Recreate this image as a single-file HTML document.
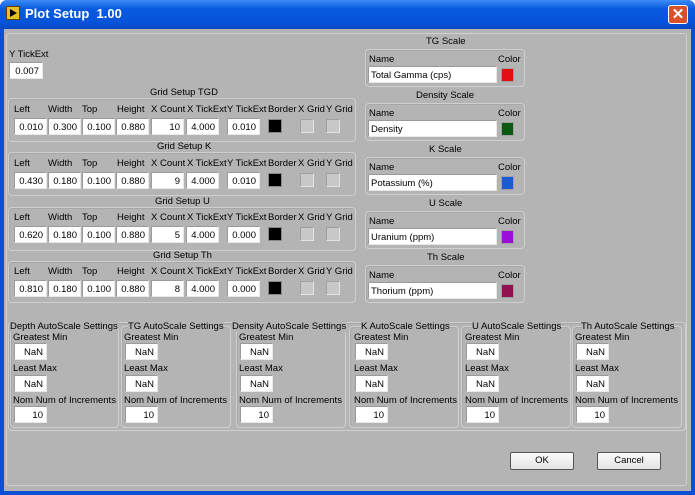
<!DOCTYPE html>
<html><head><style>
*{margin:0;padding:0;box-sizing:border-box}
body{width:695px;height:495px;overflow:hidden;background:#fff;font-family:"Liberation Sans",sans-serif;font-size:9.5px;color:#000;position:relative}
.a{position:absolute;white-space:nowrap}
.win{position:absolute;left:0;top:0;width:695px;height:495px;background:#0a4fd6;border-radius:7px 7px 0 0}
.title{position:absolute;left:0;top:0;width:695px;height:29px;border-radius:7px 7px 0 0;background:linear-gradient(#3d8cf5,#0a5ae0 30%,#0553d8 80%,#0a48c0)}
.client{position:absolute;left:4px;top:29px;width:687px;height:462px;background:#b4b4b4}
.inner{position:absolute;left:6px;top:33px;width:681px;height:453px;border:1px solid #d0d0d0;border-radius:3px}
.grp{position:absolute;border:1px solid #cfcfcf;border-radius:4px;box-shadow:inset 1px 1px 0 #a8a8a8}
.tb{position:absolute;background:#fff;height:17px;line-height:17px;text-align:right;padding-right:3px;border:1px solid #9a9a9a;border-right-color:#e8e8e8;border-bottom-color:#e8e8e8}
.sw{position:absolute;width:14px;height:14px;border:1px solid #888}
.ck{position:absolute;width:14px;height:14px;background:#c8c8c8;border:1px solid #a0a0a0;border-right-color:#e4e4e4;border-bottom-color:#e4e4e4}
.btn{position:absolute;height:18px;line-height:16px;text-align:center;background:linear-gradient(#fafafa,#e4e4e4);border:1px solid #555;border-radius:2px}
</style></head><body>
<div class="win"></div>
<div class="title"></div>
<div class="a" style="left:6px;top:6px;width:14px;height:14px;background:#e8c020;border:1px solid #604000"><div style="position:absolute;left:3px;top:2px;width:0;height:0;border-left:7px solid #000;border-top:4px solid transparent;border-bottom:4px solid transparent"></div></div>
<div class="a" style="left:25px;top:6px;color:#fff;font-weight:bold;font-size:13px">Plot Setup&nbsp;&nbsp;1.00</div>
<div class="a" style="left:668px;top:5px;width:20px;height:19px;background:#d9502c;border:1px solid #fff;border-radius:3px;color:#fff;font-size:15px;line-height:17px;text-align:center;font-weight:bold">✕</div>
<div class="client"></div>
<div class="inner"></div>

<div class="a" style="left:9px;top:49px">Y TickExt</div>
<div class="tb" style="left:9px;top:62px;width:34px">0.007</div>

<!-- grid groups -->
<div id="grids"></div>
<div class="a" style="left:150px;top:87px">Grid Setup TGD</div>
<div class="a" style="left:157px;top:141px">Grid Setup K</div>
<div class="a" style="left:155px;top:196px">Grid Setup U</div>
<div class="a" style="left:153px;top:250px">Grid Setup Th</div>

<div class="grp" style="left:8px;top:98px;width:348px;height:44px"></div>
<div class="grp" style="left:8px;top:152px;width:348px;height:44px"></div>
<div class="grp" style="left:8px;top:207px;width:348px;height:44px"></div>
<div class="grp" style="left:8px;top:261px;width:348px;height:42px"></div>

<!-- TGD -->
<div class="a" style="left:14px;top:104px">Left</div><div class="a" style="left:48px;top:104px">Width</div><div class="a" style="left:82px;top:104px">Top</div><div class="a" style="left:117px;top:104px">Height</div><div class="a" style="left:151px;top:104px">X Count</div><div class="a" style="left:187px;top:104px">X TickExt</div><div class="a" style="left:227px;top:104px">Y TickExt</div><div class="a" style="left:268px;top:104px">Border</div><div class="a" style="left:298px;top:104px">X Grid</div><div class="a" style="left:326px;top:104px">Y Grid</div>
<div class="tb" style="left:14px;top:118px;width:33px">0.010</div><div class="tb" style="left:48px;top:118px;width:33px">0.300</div><div class="tb" style="left:82px;top:118px;width:33px">0.100</div><div class="tb" style="left:116px;top:118px;width:33px">0.880</div><div class="tb" style="left:151px;top:118px;width:33px">10</div><div class="tb" style="left:186px;top:118px;width:33px">4.000</div><div class="tb" style="left:227px;top:118px;width:33px">0.010</div>
<div class="sw" style="left:268px;top:119px;background:#000"></div><div class="ck" style="left:300px;top:119px"></div><div class="ck" style="left:326px;top:119px"></div>
<!-- K -->
<div class="a" style="left:14px;top:158px">Left</div><div class="a" style="left:48px;top:158px">Width</div><div class="a" style="left:82px;top:158px">Top</div><div class="a" style="left:117px;top:158px">Height</div><div class="a" style="left:151px;top:158px">X Count</div><div class="a" style="left:187px;top:158px">X TickExt</div><div class="a" style="left:227px;top:158px">Y TickExt</div><div class="a" style="left:268px;top:158px">Border</div><div class="a" style="left:298px;top:158px">X Grid</div><div class="a" style="left:326px;top:158px">Y Grid</div>
<div class="tb" style="left:14px;top:172px;width:33px">0.430</div><div class="tb" style="left:48px;top:172px;width:33px">0.180</div><div class="tb" style="left:82px;top:172px;width:33px">0.100</div><div class="tb" style="left:116px;top:172px;width:33px">0.880</div><div class="tb" style="left:151px;top:172px;width:33px">9</div><div class="tb" style="left:186px;top:172px;width:33px">4.000</div><div class="tb" style="left:227px;top:172px;width:33px">0.010</div>
<div class="sw" style="left:268px;top:173px;background:#000"></div><div class="ck" style="left:300px;top:173px"></div><div class="ck" style="left:326px;top:173px"></div>
<!-- U -->
<div class="a" style="left:14px;top:212px">Left</div><div class="a" style="left:48px;top:212px">Width</div><div class="a" style="left:82px;top:212px">Top</div><div class="a" style="left:117px;top:212px">Height</div><div class="a" style="left:151px;top:212px">X Count</div><div class="a" style="left:187px;top:212px">X TickExt</div><div class="a" style="left:227px;top:212px">Y TickExt</div><div class="a" style="left:268px;top:212px">Border</div><div class="a" style="left:298px;top:212px">X Grid</div><div class="a" style="left:326px;top:212px">Y Grid</div>
<div class="tb" style="left:14px;top:226px;width:33px">0.620</div><div class="tb" style="left:48px;top:226px;width:33px">0.180</div><div class="tb" style="left:82px;top:226px;width:33px">0.100</div><div class="tb" style="left:116px;top:226px;width:33px">0.880</div><div class="tb" style="left:151px;top:226px;width:33px">5</div><div class="tb" style="left:186px;top:226px;width:33px">4.000</div><div class="tb" style="left:227px;top:226px;width:33px">0.000</div>
<div class="sw" style="left:268px;top:227px;background:#000"></div><div class="ck" style="left:300px;top:227px"></div><div class="ck" style="left:326px;top:227px"></div>
<!-- Th -->
<div class="a" style="left:14px;top:266px">Left</div><div class="a" style="left:48px;top:266px">Width</div><div class="a" style="left:82px;top:266px">Top</div><div class="a" style="left:117px;top:266px">Height</div><div class="a" style="left:151px;top:266px">X Count</div><div class="a" style="left:187px;top:266px">X TickExt</div><div class="a" style="left:227px;top:266px">Y TickExt</div><div class="a" style="left:268px;top:266px">Border</div><div class="a" style="left:298px;top:266px">X Grid</div><div class="a" style="left:326px;top:266px">Y Grid</div>
<div class="tb" style="left:14px;top:280px;width:33px">0.810</div><div class="tb" style="left:48px;top:280px;width:33px">0.180</div><div class="tb" style="left:82px;top:280px;width:33px">0.100</div><div class="tb" style="left:116px;top:280px;width:33px">0.880</div><div class="tb" style="left:151px;top:280px;width:33px">8</div><div class="tb" style="left:186px;top:280px;width:33px">4.000</div><div class="tb" style="left:227px;top:280px;width:33px">0.000</div>
<div class="sw" style="left:268px;top:281px;background:#000"></div><div class="ck" style="left:300px;top:281px"></div><div class="ck" style="left:326px;top:281px"></div>

<!-- scales -->
<div class="a" style="left:426px;top:36px">TG Scale</div>
<div class="grp" style="left:365px;top:49px;width:160px;height:38px"></div>
<div class="a" style="left:369px;top:54px">Name</div><div class="a" style="left:498px;top:54px">Color</div>
<div class="tb" style="left:368px;top:66px;width:129px;text-align:left;padding-left:2px">Total Gamma (cps)</div>
<div class="sw" style="left:501px;top:68px;width:13px;background:#e01010;border-color:#a0a0a0"></div>

<div class="a" style="left:416px;top:90px">Density Scale</div>
<div class="grp" style="left:365px;top:103px;width:160px;height:38px"></div>
<div class="a" style="left:369px;top:108px">Name</div><div class="a" style="left:498px;top:108px">Color</div>
<div class="tb" style="left:368px;top:120px;width:129px;text-align:left;padding-left:2px">Density</div>
<div class="sw" style="left:501px;top:122px;width:13px;background:#0a5a14;border-color:#a0a0a0"></div>

<div class="a" style="left:429px;top:144px">K Scale</div>
<div class="grp" style="left:365px;top:157px;width:160px;height:38px"></div>
<div class="a" style="left:369px;top:162px">Name</div><div class="a" style="left:498px;top:162px">Color</div>
<div class="tb" style="left:368px;top:174px;width:129px;text-align:left;padding-left:2px">Potassium (%)</div>
<div class="sw" style="left:501px;top:176px;width:13px;background:#1a5cd0;border-color:#a0a0a0"></div>

<div class="a" style="left:429px;top:198px">U Scale</div>
<div class="grp" style="left:365px;top:211px;width:160px;height:38px"></div>
<div class="a" style="left:369px;top:216px">Name</div><div class="a" style="left:498px;top:216px">Color</div>
<div class="tb" style="left:368px;top:228px;width:129px;text-align:left;padding-left:2px">Uranium (ppm)</div>
<div class="sw" style="left:501px;top:230px;width:13px;background:#9a10d8;border-color:#a0a0a0"></div>

<div class="a" style="left:427px;top:252px">Th Scale</div>
<div class="grp" style="left:365px;top:265px;width:160px;height:38px"></div>
<div class="a" style="left:369px;top:270px">Name</div><div class="a" style="left:498px;top:270px">Color</div>
<div class="tb" style="left:368px;top:282px;width:129px;text-align:left;padding-left:2px">Thorium (ppm)</div>
<div class="sw" style="left:501px;top:284px;width:13px;background:#901050;border-color:#a0a0a0"></div>

<!-- autoscale -->
<div class="grp" style="left:8px;top:322px;width:678px;height:109px"></div>
<div class="grp" style="left:10px;top:326px;width:109px;height:102px"></div>
<div class="grp" style="left:121px;top:326px;width:110px;height:102px"></div>
<div class="grp" style="left:236px;top:326px;width:110px;height:102px"></div>
<div class="grp" style="left:349px;top:326px;width:110px;height:102px"></div>
<div class="grp" style="left:461px;top:326px;width:110px;height:102px"></div>
<div class="grp" style="left:572px;top:326px;width:110px;height:102px"></div>

<div class="a" style="left:10px;top:321px;background:#b4b4b4">Depth AutoScale Settings</div>
<div class="a" style="left:128px;top:321px;background:#b4b4b4">TG AutoScale Settings</div>
<div class="a" style="left:232px;top:321px;background:#b4b4b4">Density AutoScale Settings</div>
<div class="a" style="left:361px;top:321px;background:#b4b4b4">K AutoScale Settings</div>
<div class="a" style="left:472px;top:321px;background:#b4b4b4">U AutoScale Settings</div>
<div class="a" style="left:581px;top:321px;background:#b4b4b4">Th AutoScale Settings</div>

<div class="a" style="left:13px;top:332px">Greatest Min</div><div class="tb" style="left:14px;top:343px;width:33px">NaN</div>
<div class="a" style="left:13px;top:363px">Least Max</div><div class="tb" style="left:14px;top:375px;width:33px">NaN</div>
<div class="a" style="left:13px;top:395px">Nom Num of Increments</div><div class="tb" style="left:14px;top:406px;width:33px">10</div>

<div class="a" style="left:124px;top:332px">Greatest Min</div><div class="tb" style="left:125px;top:343px;width:33px">NaN</div>
<div class="a" style="left:124px;top:363px">Least Max</div><div class="tb" style="left:125px;top:375px;width:33px">NaN</div>
<div class="a" style="left:124px;top:395px">Nom Num of Increments</div><div class="tb" style="left:125px;top:406px;width:33px">10</div>

<div class="a" style="left:239px;top:332px">Greatest Min</div><div class="tb" style="left:240px;top:343px;width:33px">NaN</div>
<div class="a" style="left:239px;top:363px">Least Max</div><div class="tb" style="left:240px;top:375px;width:33px">NaN</div>
<div class="a" style="left:239px;top:395px">Nom Num of Increments</div><div class="tb" style="left:240px;top:406px;width:33px">10</div>

<div class="a" style="left:354px;top:332px">Greatest Min</div><div class="tb" style="left:355px;top:343px;width:33px">NaN</div>
<div class="a" style="left:354px;top:363px">Least Max</div><div class="tb" style="left:355px;top:375px;width:33px">NaN</div>
<div class="a" style="left:354px;top:395px">Nom Num of Increments</div><div class="tb" style="left:355px;top:406px;width:33px">10</div>

<div class="a" style="left:465px;top:332px">Greatest Min</div><div class="tb" style="left:466px;top:343px;width:33px">NaN</div>
<div class="a" style="left:465px;top:363px">Least Max</div><div class="tb" style="left:466px;top:375px;width:33px">NaN</div>
<div class="a" style="left:465px;top:395px">Nom Num of Increments</div><div class="tb" style="left:466px;top:406px;width:33px">10</div>

<div class="a" style="left:575px;top:332px">Greatest Min</div><div class="tb" style="left:576px;top:343px;width:33px">NaN</div>
<div class="a" style="left:575px;top:363px">Least Max</div><div class="tb" style="left:576px;top:375px;width:33px">NaN</div>
<div class="a" style="left:575px;top:395px">Nom Num of Increments</div><div class="tb" style="left:576px;top:406px;width:33px">10</div>

<div class="btn" style="left:510px;top:452px;width:64px">OK</div>
<div class="btn" style="left:597px;top:452px;width:64px">Cancel</div>
</body></html>
